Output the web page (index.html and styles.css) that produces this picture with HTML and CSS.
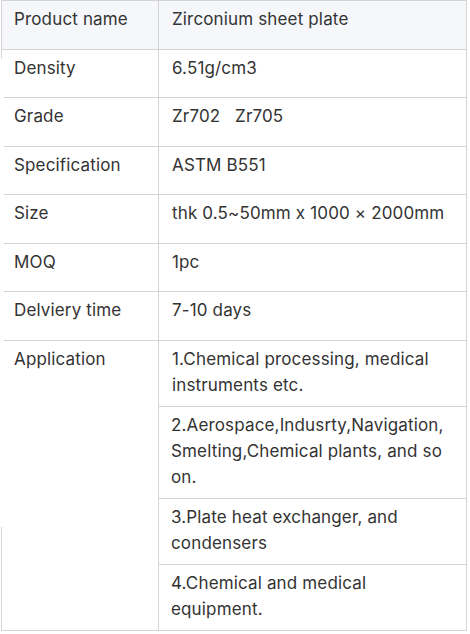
FILE: index.html
```html
<!DOCTYPE html>
<html>
<head>
<meta charset="utf-8">
<link rel="stylesheet" href="styles.css">
</head>
<body>
<div class="wrap">
<table class="spec">
  <tr class="head main">
    <td class="c1">Product name</td>
    <td class="c2">Zirconium sheet plate</td>
  </tr>
  <tr class="main"><td>Density</td><td>6.51g/cm3</td></tr>
  <tr class="main"><td>Grade</td><td>Zr702&nbsp;&nbsp;&nbsp;Zr705</td></tr>
  <tr class="main"><td>Specification</td><td>ASTM B551</td></tr>
  <tr class="main"><td>Size</td><td>thk 0.5~50mm x 1000 × 2000mm</td></tr>
  <tr class="main"><td>MOQ</td><td>1pc</td></tr>
  <tr class="main"><td>Delviery time</td><td>7-10 days</td></tr>
  <tr><td rowspan="4">Application</td><td>1.Chemical processing, medical instruments etc.</td></tr>
  <tr><td>2.Aerospace,Indusrty,Navigation, Smelting,Chemical plants, and so on.</td></tr>
  <tr><td>3.Plate heat exchanger, and condensers</td></tr>
  <tr><td>4.Chemical and medical equipment.</td></tr>
</table>
<div class="mask"></div>
</div>
</body>
</html>
```
FILE: styles.css
```css
html, body {
  margin: 0;
  padding: 0;
  background: #fff;
}
.wrap {
  position: relative;
  padding-left: 1px;
}
.spec {
  border-collapse: collapse;
  width: 466px;
  table-layout: fixed;
  font-family: Inter, "Noto Sans", sans-serif;
  font-size: 17px;
  letter-spacing: 0.15px;
  line-height: 26px;
  color: #333;
}
.spec td {
  border: 1px solid #d4d4d4;
  padding: 5px 13px 8px 13px;
  vertical-align: top;
}
.spec td.c1 {
  width: 131px;
  padding-left: 12px;
  padding-right: 13px;
}
.spec tr td:first-child {
  padding-left: 12px;
}
.spec tr.main td { height: 34.5px; }
.spec tr.head td {
  background: #f5f7fa;
}
.mask {
  position: absolute;
  left: 0;
  top: 58px;
  width: 4px;
  height: 469px;
  background: #fff;
}
```
